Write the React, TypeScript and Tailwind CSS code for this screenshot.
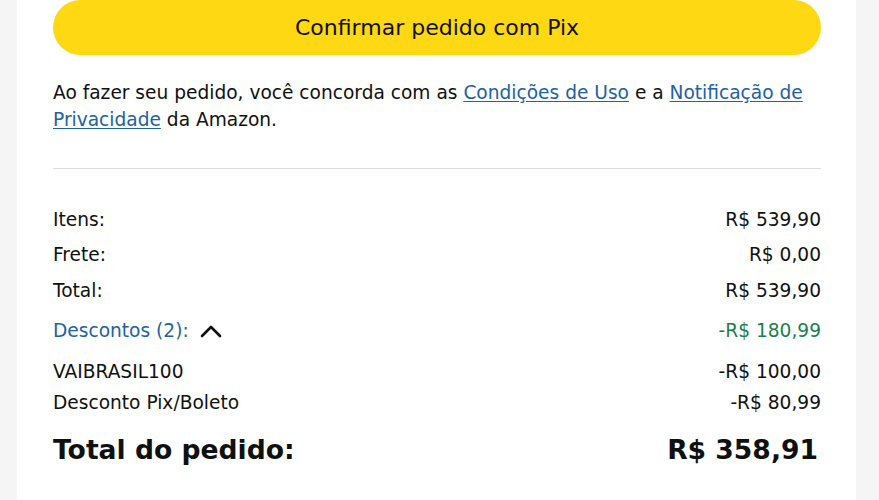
const rows = [
  { label: 'Itens:', value: 'R$ 539,90', h: 'h-[35px]' },
  { label: 'Frete:', value: 'R$ 0,00', h: 'h-[36px]' },
  { label: 'Total:', value: 'R$ 539,90', h: 'h-[36px]' },
];

const discounts = [
  { label: 'VAIBRASIL100', value: '-R$ 100,00', h: 'h-[38px]' },
  { label: 'Desconto Pix/Boleto', value: '-R$ 80,99', h: 'h-[24px]' },
];

function Chevron() {
  return (
    <svg width="22" height="14" viewBox="0 0 22 14" fill="none" className="text-[#0f1111]">
      <polyline points="2,12 11,3 20,12" stroke="currentColor" strokeWidth="2.6" strokeLinecap="round" strokeLinejoin="round" />
    </svg>
  );
}

export default function App() {
  return (
    <div className="min-h-[500px] bg-[#f5f5f5] font-['DejaVu_Sans',Verdana,sans-serif] text-[#0f1111]">
      <div className="ml-[17px] mr-[23px] h-[500px] bg-white pl-[36px] pr-[35px]">
        <button className="flex h-[55px] w-full items-center justify-center rounded-full bg-[#ffd814] text-[22px] text-[#0f1111]">
          Confirmar pedido com Pix
        </button>

        <p className="mt-[24px] text-[18.6px] leading-[27px]">
          Ao fazer seu pedido, você concorda com as{' '}
          <a href="#" className="text-[#2162a1] underline underline-offset-2">Condições de Uso</a> e a{' '}
          <a href="#" className="text-[#2162a1] underline underline-offset-2">Notificação de Privacidade</a> da Amazon.
        </p>

        <div className="mt-[35px] h-px bg-[#dcdcdc]" />

        <div className="mt-[33px] flex flex-col text-[18.6px]">
          {rows.map(r => (
            <div key={r.label} className={`flex items-center justify-between ${r.h}`}>
              <span>{r.label}</span>
              <span>{r.value}</span>
            </div>
          ))}

          <div className="flex h-[44px] items-center justify-between">
            <button className="flex items-center gap-[11px] text-[#2162a1]">
              Descontos (2):
              <Chevron />
            </button>
            <span className="text-[#1b7f4d]">-R$ 180,99</span>
          </div>

          {discounts.map(d => (
            <div key={d.label} className={`flex items-center justify-between ${d.h}`}>
              <span>{d.label}</span>
              <span>{d.value}</span>
            </div>
          ))}

          <div className="flex h-[70px] items-center justify-between pr-[3px] text-[26.6px] font-bold">
            <span>Total do pedido:</span>
            <span>R$ 358,91</span>
          </div>
        </div>
      </div>
    </div>
  );
}
